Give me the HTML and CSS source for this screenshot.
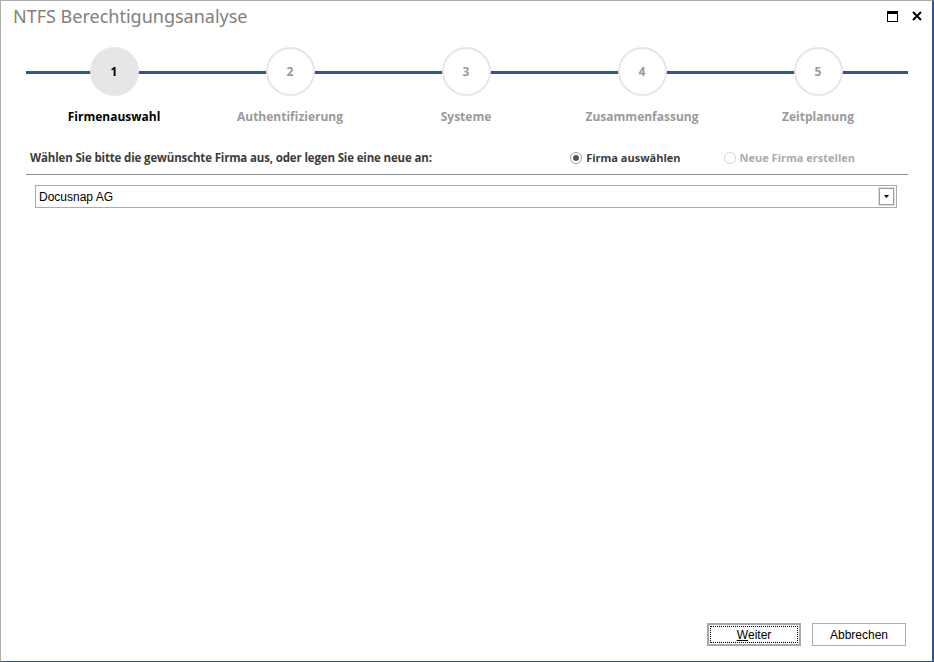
FILE: index.html
```html
<!DOCTYPE html>
<html lang="de">
<head>
<meta charset="utf-8">
<title>NTFS Berechtigungsanalyse</title>
<link rel="stylesheet" href="styles.css">
</head>
<body>
<div class="window">
  <div class="titlebar">
    <div class="title">NTFS Berechtigungsanalyse</div>
    <div class="controls">
      <svg class="ctl" width="11" height="11" viewBox="0 0 11 11"><rect x="0.5" y="0.5" width="10" height="10" fill="none" stroke="#000" stroke-width="1"/><rect x="0" y="0" width="11" height="3" fill="#000"/></svg>
      <svg class="ctl" width="10" height="10" viewBox="0 0 10 10"><path d="M1 1 L9 9 M9 1 L1 9" stroke="#000" stroke-width="2"/></svg>
    </div>
  </div>

  <div class="stepper">
    <div class="step active"><div class="circle">1</div><div class="label">Firmenauswahl</div></div>
    <div class="step"><div class="circle">2</div><div class="label">Authentifizierung</div></div>
    <div class="step"><div class="circle">3</div><div class="label">Systeme</div></div>
    <div class="step"><div class="circle">4</div><div class="label">Zusammenfassung</div></div>
    <div class="step"><div class="circle">5</div><div class="label">Zeitplanung</div></div>
  </div>

  <div class="content">
    <div class="prompt-row">
      <div class="prompt">Wählen Sie bitte die gewünschte Firma aus, oder legen Sie eine neue an:</div>
      <div class="radios">
        <div class="radio checked"><span class="dot"></span>Firma auswählen</div>
        <div class="radio disabled"><span class="dot"></span>Neue Firma erstellen</div>
      </div>
    </div>
    <div class="combo">
      <span class="combo-text">Docusnap AG</span>
      <span class="combo-btn"><svg width="5" height="3" viewBox="0 0 5 3"><path d="M0 0 H5 L2.5 3 Z" fill="#000"/></svg></span>
    </div>
  </div>

  <div class="buttons">
    <button class="btn default"><span class="focus"><u>W</u>eiter</span></button>
    <button class="btn"><span class="focus-none">Abbrechen</span></button>
  </div>
</div>
</body>
</html>
```

FILE: styles.css
```css
* { box-sizing: border-box; }
html, body { margin: 0; padding: 0; background: #fff; }
.window {
  width: 934px;
  height: 662px;
  border-top: 1px solid #acacac;
  border-left: 1px solid #acacac;
  border-right: 2px solid #2b579a;
  border-bottom: 1px solid #2b579a;
  display: flex;
  flex-direction: column;
  background: #fff;
}
.titlebar {
  height: 30px;
  display: flex;
  justify-content: space-between;
  align-items: flex-start;
  padding: 3px 10px 0 12px;
}
.title {
  font-family: "Noto Sans", "Open Sans", sans-serif;
  font-size: 18px;
  line-height: 24px;
  color: #808080;
}
.controls {
  display: flex;
  gap: 14px;
  padding-top: 7px;
}
.ctl { display: block; }

.stepper {
  display: grid;
  grid-template-columns: repeat(5, 176px);
  margin: 16px 0 0 25px;
  width: 882px;
  position: relative;
}
.stepper::before {
  content: "";
  position: absolute;
  left: 0;
  right: 0;
  top: 24px;
  height: 3px;
  background: #2b579a;
}
.step {
  display: flex;
  flex-direction: column;
  align-items: center;
  position: relative;
}
.circle {
  width: 49px;
  height: 49px;
  border-radius: 50%;
  border: 2px solid #e6e6e6;
  background: #fff;
  display: flex;
  align-items: center;
  justify-content: center;
  font-family: "Open Sans", sans-serif;
  font-weight: 700;
  font-size: 12px;
  color: #999;
}
.step.active .circle {
  background: #e6e6e6;
  color: #000;
}
.label {
  margin-top: 13px;
  font-family: "Open Sans", sans-serif;
  font-weight: 700;
  font-size: 12px;
  line-height: 16px;
  color: #9a9a9a;
}
.step.active .label { color: #000; }

.content {
  margin: 24px 0 0 25px;
  width: 882px;
}
.prompt-row {
  display: flex;
  align-items: center;
  height: 26px;
  padding: 0 0 8px 4px;
  border-bottom: 1px solid #8c8c8c;
  font-family: "Open Sans", sans-serif;
  font-weight: 700;
  font-size: 11.5px;
  color: #3c3c3c;
}
.prompt { flex: 1; letter-spacing: -0.15px; }
.radios {
  display: flex;
  gap: 43px;
  margin-right: 53px;
  font-size: 11px;
}
.radio {
  display: flex;
  align-items: center;
  gap: 4px;
}
.radio .dot {
  width: 12px;
  height: 12px;
  border-radius: 50%;
  border: 1px solid #a0a0a0;
  background: #fff;
  display: flex;
  align-items: center;
  justify-content: center;
}
.radio.checked .dot::after {
  content: "";
  width: 6px;
  height: 6px;
  border-radius: 50%;
  background: #555;
}
.radio.disabled { color: #ababab; }
.radio.disabled .dot { border-color: #d5d5d5; }

.combo {
  margin: 10px 11px 0 9px;
  height: 23px;
  border: 1px solid #ababab;
  display: flex;
  align-items: center;
  justify-content: space-between;
  padding: 0 2px 0 3px;
  font-family: "Liberation Sans", Arial, sans-serif;
  font-size: 12px;
  color: #000;
}
.combo-btn {
  width: 15px;
  height: 17px;
  border: 1px solid #9c9c9c;
  outline: 1px solid #e0e0e0;
  display: flex;
  align-items: center;
  justify-content: center;
  background: #fff;
}
.combo-btn svg { display: block; }

.buttons {
  margin-top: auto;
  display: flex;
  justify-content: flex-end;
  gap: 11px;
  padding: 0 26px 15px 0;
}
.btn {
  width: 94px;
  height: 23px;
  padding: 0;
  background: #fff;
  border: 1px solid #adadad;
  font-family: "Liberation Sans", Arial, sans-serif;
  font-size: 12px;
  color: #000;
  display: flex;
  align-items: stretch;
  justify-content: stretch;
}
.btn.default {
  width: 94px;
  border: 2px solid #a8a8a8;
}
.btn .focus {
  flex: 1;
  margin: 1px;
  border: 1px dotted #000;
  display: flex;
  align-items: center;
  justify-content: center;
}
.btn .focus-none {
  flex: 1;
  display: flex;
  align-items: center;
  justify-content: center;
}
```
